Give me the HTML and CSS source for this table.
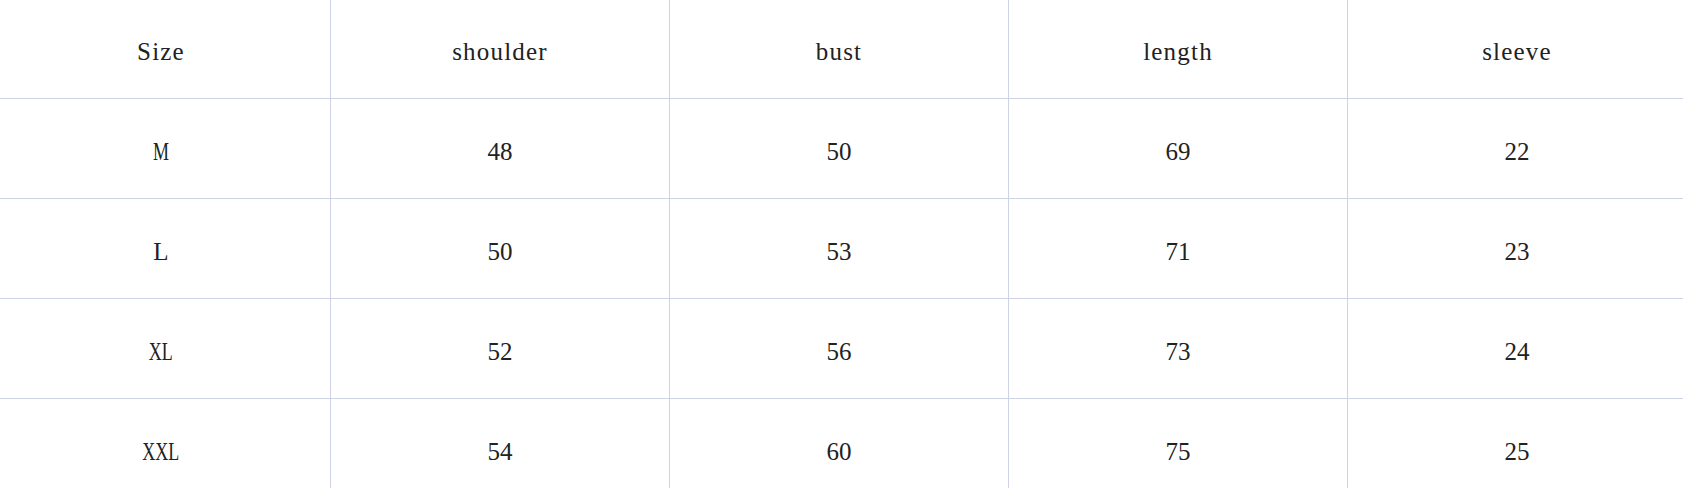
FILE: index.html
```html
<!DOCTYPE html>
<html lang="en">
<head>
<meta charset="utf-8">
<title>Size chart</title>
<link rel="stylesheet" href="styles.css">
</head>
<body>
<div class="chart">
  <div class="cell head"><span class="txt">Size</span></div>
  <div class="cell head"><span class="txt">shoulder</span></div>
  <div class="cell head"><span class="txt">bust</span></div>
  <div class="cell head"><span class="txt">length</span></div>
  <div class="cell head"><span class="txt">sleeve</span></div>

  <div class="cell"><span class="txt narrow">M</span></div>
  <div class="cell"><span class="txt">48</span></div>
  <div class="cell"><span class="txt">50</span></div>
  <div class="cell"><span class="txt">69</span></div>
  <div class="cell"><span class="txt">22</span></div>

  <div class="cell"><span class="txt">L</span></div>
  <div class="cell"><span class="txt">50</span></div>
  <div class="cell"><span class="txt">53</span></div>
  <div class="cell"><span class="txt">71</span></div>
  <div class="cell"><span class="txt">23</span></div>

  <div class="cell"><span class="txt narrow">XL</span></div>
  <div class="cell"><span class="txt">52</span></div>
  <div class="cell"><span class="txt">56</span></div>
  <div class="cell"><span class="txt">73</span></div>
  <div class="cell"><span class="txt">24</span></div>

  <div class="cell"><span class="txt narrow">XXL</span></div>
  <div class="cell"><span class="txt">54</span></div>
  <div class="cell"><span class="txt">60</span></div>
  <div class="cell"><span class="txt">75</span></div>
  <div class="cell"><span class="txt">25</span></div>
</div>
</body>
</html>
```

FILE: styles.css
```css
html, body {
  margin: 0;
  padding: 0;
  overflow: hidden;
  background: #ffffff;
}

.chart {
  display: grid;
  grid-template-columns: repeat(5, 339px);
  grid-auto-rows: 100px;
  width: 1695px;
  margin: -1px 0 0 -8px;
}

.cell {
  box-sizing: border-box;
  border-right: 1px solid #cdd3e5;
  border-bottom: 1px solid #cdd3e5;
  display: flex;
  align-items: center;
  justify-content: center;
  padding-top: 6px;
}

.txt {
  display: inline-block;
  font-family: "Liberation Serif", "DejaVu Serif", serif;
  font-size: 25px;
  line-height: 1;
  color: #222222;
  white-space: nowrap;
}

.head .txt {
  letter-spacing: 1.2px;
}

.narrow {
  transform: scaleX(0.72);
}
```
